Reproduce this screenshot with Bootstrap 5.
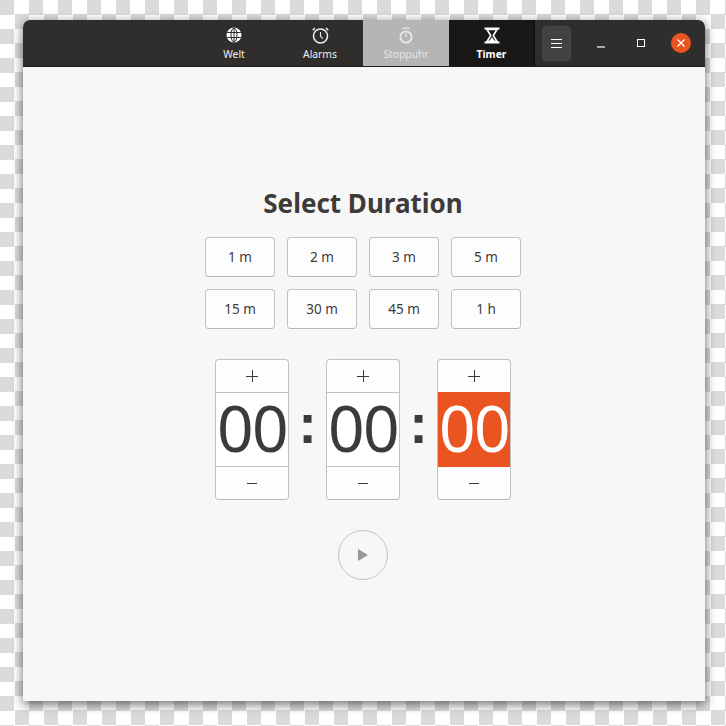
<!DOCTYPE html>
<html lang="en">
<head>
    <meta charset="UTF-8">
    <meta name="viewport" content="width=device-width, initial-scale=1.0">
    <title>Timer</title>
    <link href="https://cdn.jsdelivr.net/npm/bootstrap@5.3.0/dist/css/bootstrap.min.css" rel="stylesheet">
    <style>
        html, body { height: 100%; }
        body {
            font-family: "Noto Sans", "Open Sans", sans-serif;
            color: #3d3a38;
            overflow: hidden;
            background-color: #fff;
            background-image: conic-gradient(#fff 25%, #dbdbdb 0 50%, #fff 0 75%, #dbdbdb 0);
            background-size: 29px 29px;
            padding: 20px 21px 25px 23px;
        }
        .app-window {
            width: 682px;
            height: 681px;
            background: #f7f7f7;
            border-radius: 7px 7px 0 0;
            box-shadow: 0 3px 11px rgba(0, 0, 0, .6);
        }
        .app-header {
            height: 47px;
            background: #302e2d;
            border-radius: 7px 7px 0 0;
            border-bottom: 1px solid #1c1b1a;
            color: #fff;
        }
        .tabs-spacer { width: 168px; }
        .view-tab {
            width: 86px;
            height: 46px;
            padding-top: 7px;
            font-size: 10.3px;
            line-height: 14px;
            color: #f0efee;
        }
        .view-tab svg { display: block; height: 17px; margin-bottom: 3px; }
        .tab-hover { background: #b5b5b5; color: #e6e6e6; }
        .tab-active { background: #191817; color: #fff; font-weight: 700; border-right: 1px solid #0e0e0e; }
        .menu-btn {
            width: 29px;
            height: 35px;
            margin-left: 7px;
            background: #444240;
            border: 1px solid #4a4846;
            border-radius: 4px;
        }
        .win-ctl { width: 40px; height: 46px; }
        .win-ctl-first { margin-left: 10px; }
        .close-dot { width: 20px; height: 20px; border-radius: 50%; background: #e95420; }
        .timer-body { padding-top: 118px; padding-right: 2px; }
        .timer-title {
            font-size: 26px;
            line-height: 36px;
            font-weight: 700;
            margin-bottom: 16px;
        }
        .preset-row { gap: 12px; margin-bottom: 12px; }
        .preset-btn {
            width: 70px;
            height: 40px;
            padding: 0;
            font-size: 13.5px;
            color: #3d3a38;
            background: #fdfdfd;
            border: 1px solid #c4c2c0;
            border-bottom-color: #b9b7b5;
            border-radius: 4px;
        }
        .spin-row { margin-top: 30px; }
        .spin-box {
            width: 74px;
            height: 141px;
            background: #fdfdfd;
            border: 1px solid #c4c2c0;
            border-bottom-color: #b9b7b5;
            border-radius: 4px;
            overflow: hidden;
        }
        .spin-step { height: 32px; }
        .spin-value {
            height: 75px;
            padding-bottom: 3px;
            background: #fff;
            border-top: 1px solid #c4c2c0;
            border-bottom: 1px solid #c4c2c0;
            font-size: 64px;
            line-height: 1;
            letter-spacing: -1.5px;
        }
        .spin-value-on {
            background: #e95420;
            color: #fff;
            border-color: #e95420;
            margin: 0 -1px;
        }
        .spin-colon {
            width: 37px;
            height: 141px;
            padding-bottom: 12px;
            font-family: "Liberation Sans", sans-serif;
            font-size: 56px;
            font-weight: 700;
            line-height: 1;
        }
        .play-btn {
            width: 50px;
            height: 50px;
            padding: 0;
            margin-top: 30px;
            background: transparent;
            border: 1px solid #c4c2c0;
            border-radius: 50%;
        }
    </style>
</head>
<body>
<div class="app-window d-flex flex-column">

    <!-- Header bar -->
    <div class="app-header d-flex flex-shrink-0">
        <div class="tabs-spacer"></div>
        <div class="view-tab d-flex flex-column align-items-center">
            <svg width="16" height="17" viewBox="0 0 16 17"><circle cx="8" cy="8" r="7.5" fill="#fff"/><g fill="none" stroke="#302e2d" stroke-width="1"><ellipse cx="8" cy="8" rx="3" ry="7"/><path d="M8 1v14M1.2 5.5h13.6M1.2 10.5h13.6"/></g></svg>
            <span>Welt</span>
        </div>
        <div class="view-tab d-flex flex-column align-items-center">
            <svg width="17" height="17" viewBox="0 0 17 17"><circle cx="8.5" cy="9" r="7" fill="none" stroke="#f0efee" stroke-width="1.5"/><path d="M8.5 5v4.3l2.3 2.3" fill="none" stroke="#f0efee" stroke-width="1.1"/><path d="M.8 3.2 3 1M16.2 3.2 14 1" stroke="#f0efee" stroke-width="1.6"/></svg>
            <span>Alarms</span>
        </div>
        <div class="view-tab tab-hover d-flex flex-column align-items-center">
            <svg width="14" height="17" viewBox="0 0 14 17"><circle cx="7" cy="10" r="5.6" fill="none" stroke="#e6e6e6" stroke-width="2"/><path d="M3.5 1.2h7M7 6.5V10" stroke="#e6e6e6" stroke-width="1.4" fill="none"/></svg>
            <span>Stoppuhr</span>
        </div>
        <div class="view-tab tab-active d-flex flex-column align-items-center">
            <svg width="16" height="17" viewBox="0 0 16 17"><path d="M.5 1.5h15M.5 15.5h15" stroke="#fff" stroke-width="2"/><path d="M3 2.5h10L9.3 8.5l3.7 6H3l3.7-6Z" fill="none" stroke="#fff" stroke-width="1.6"/><path d="M5 14.5 8 10l3 4.5Z" fill="#fff"/></svg>
            <span>Timer</span>
        </div>
        <div class="menu-btn align-self-center d-flex align-items-center justify-content-center">
            <svg width="11" height="11" viewBox="0 0 11 11"><path d="M0 1.5h11M0 5.5h11M0 9.5h11" stroke="#fff" stroke-width="1"/></svg>
        </div>
        <div class="win-ctl win-ctl-first d-flex align-items-center justify-content-center">
            <svg width="8" height="10" viewBox="0 0 8 10"><path d="M0 9h8" stroke="#fff" stroke-width="1.2"/></svg>
        </div>
        <div class="win-ctl d-flex align-items-center justify-content-center">
            <svg width="8" height="8" viewBox="0 0 8 8"><rect x=".5" y=".5" width="7" height="7" fill="none" stroke="#fff" stroke-width="1"/></svg>
        </div>
        <div class="win-ctl d-flex align-items-center justify-content-center">
            <div class="close-dot d-flex align-items-center justify-content-center">
                <svg width="8" height="8" viewBox="0 0 8 8"><path d="M.5.5l7 7M7.5.5l-7 7" stroke="#fff" stroke-width="1.4"/></svg>
            </div>
        </div>
    </div>

    <!-- Timer setup -->
    <div class="timer-body d-flex flex-column align-items-center">
        <h1 class="timer-title">Select Duration</h1>

        <div class="preset-row d-flex">
            <button class="btn preset-btn">1 m</button>
            <button class="btn preset-btn">2 m</button>
            <button class="btn preset-btn">3 m</button>
            <button class="btn preset-btn">5 m</button>
        </div>
        <div class="preset-row d-flex mb-0">
            <button class="btn preset-btn">15 m</button>
            <button class="btn preset-btn">30 m</button>
            <button class="btn preset-btn">45 m</button>
            <button class="btn preset-btn">1 h</button>
        </div>

        <div class="spin-row d-flex">
            <div class="spin-box d-flex flex-column">
                <div class="spin-step d-flex align-items-center justify-content-center"><svg width="12" height="12" viewBox="0 0 12 12"><path d="M6.5 0v12M0 6.5h12" stroke="#3d3a38" stroke-width="1"/></svg></div>
                <div class="spin-value d-flex align-items-center justify-content-center">00</div>
                <div class="spin-step d-flex align-items-center justify-content-center"><svg width="12" height="12" viewBox="0 0 12 12"><path d="M1 6.5h10" stroke="#3d3a38" stroke-width="1"/></svg></div>
            </div>
            <div class="spin-colon d-flex align-items-center justify-content-center">:</div>
            <div class="spin-box d-flex flex-column">
                <div class="spin-step d-flex align-items-center justify-content-center"><svg width="12" height="12" viewBox="0 0 12 12"><path d="M6.5 0v12M0 6.5h12" stroke="#3d3a38" stroke-width="1"/></svg></div>
                <div class="spin-value d-flex align-items-center justify-content-center">00</div>
                <div class="spin-step d-flex align-items-center justify-content-center"><svg width="12" height="12" viewBox="0 0 12 12"><path d="M1 6.5h10" stroke="#3d3a38" stroke-width="1"/></svg></div>
            </div>
            <div class="spin-colon d-flex align-items-center justify-content-center">:</div>
            <div class="spin-box d-flex flex-column">
                <div class="spin-step d-flex align-items-center justify-content-center"><svg width="12" height="12" viewBox="0 0 12 12"><path d="M6.5 0v12M0 6.5h12" stroke="#3d3a38" stroke-width="1"/></svg></div>
                <div class="spin-value spin-value-on d-flex align-items-center justify-content-center">00</div>
                <div class="spin-step d-flex align-items-center justify-content-center"><svg width="12" height="12" viewBox="0 0 12 12"><path d="M1 6.5h10" stroke="#3d3a38" stroke-width="1"/></svg></div>
            </div>
        </div>

        <button class="btn play-btn d-flex align-items-center justify-content-center">
            <svg width="10" height="12" viewBox="0 0 10 12"><path d="M0 0l10 6-10 6z" fill="#999"/></svg>
        </button>
    </div>
</div>
</body>
</html>
